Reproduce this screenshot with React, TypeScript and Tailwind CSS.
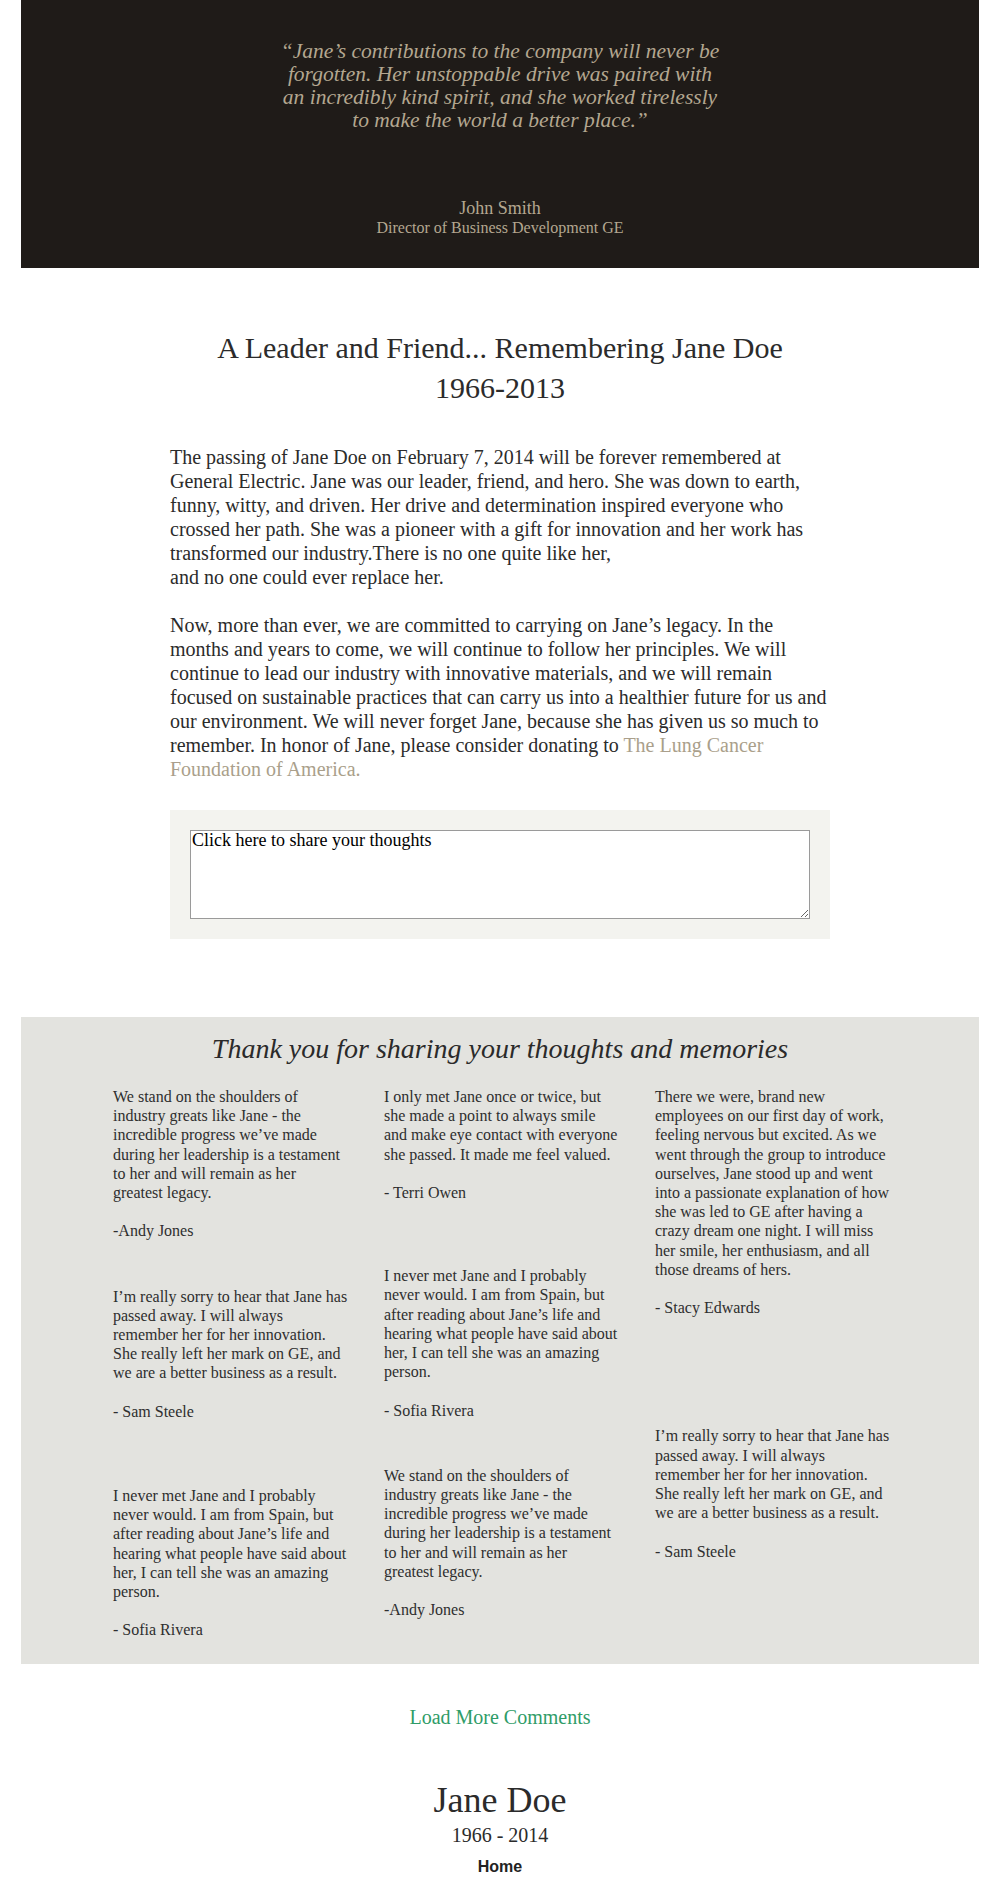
import React from 'react';

interface Memory {
  text: string;
  author: string;
  gap: string;
}

const columns: Memory[][] = [
  [
    {
      text: 'We stand on the shoulders of industry greats like Jane - the incredible progress we’ve made during her leadership is a testament to her and will remain as her greatest legacy.',
      author: '-Andy Jones',
      gap: 'mt-0',
    },
    {
      text: 'I’m really sorry to hear that Jane has passed away. I will always remember her for her innovation. She really left her mark on GE, and we are a better business as a result.',
      author: '- Sam Steele',
      gap: 'mt-[46px]',
    },
    {
      text: 'I never met Jane and I probably never would. I am from Spain, but after reading about Jane’s life and hearing what people have said about her, I can tell she was an amazing person.',
      author: '- Sofia Rivera',
      gap: 'mt-[65px]',
    },
  ],
  [
    {
      text: 'I only met Jane once or twice, but she made a point to always smile and make eye contact with everyone she passed. It made me feel valued.',
      author: '- Terri Owen',
      gap: 'mt-0',
    },
    {
      text: 'I never met Jane and I probably never would. I am from Spain, but after reading about Jane’s life and hearing what people have said about her, I can tell she was an amazing person.',
      author: '- Sofia Rivera',
      gap: 'mt-[64px]',
    },
    {
      text: 'We stand on the shoulders of industry greats like Jane - the incredible progress we’ve made during her leadership is a testament to her and will remain as her greatest legacy.',
      author: '-Andy Jones',
      gap: 'mt-[46px]',
    },
  ],
  [
    {
      text: 'There we were, brand new employees on our first day of work, feeling nervous but excited. As we went through the group to introduce ourselves, Jane stood up and went into a passionate explanation of how she was led to GE after having a crazy dream one night. I will miss her smile, her enthusiasm, and all those dreams of hers.',
      author: '- Stacy Edwards',
      gap: 'mt-0',
    },
    {
      text: 'I’m really sorry to hear that Jane has passed away. I will always remember her for her innovation. She really left her mark on GE, and we are a better business as a result.',
      author: '- Sam Steele',
      gap: 'mt-[109px]',
    },
  ],
];

const App: React.FC = () => {
  return (
    <div className="min-h-[1892px] bg-white font-['Liberation_Serif','Times_New_Roman',serif] text-[#2b2b2b]">
      {/* Tribute quote */}
      <section className="mx-[21px] h-[268px] bg-[#1f1b18] pt-[40px] text-center text-[#b4a790]">
        <p className="mx-auto text-[21.5px] italic leading-[23px] whitespace-nowrap">
          “Jane’s contributions to the company will never be
          <br />
          forgotten. Her unstoppable drive was paired with
          <br />
          an incredibly kind spirit, and she worked tirelessly
          <br />
          to make the world a better place.”
        </p>
        <p className="mt-[66px] text-[18px] leading-[20px]">John Smith</p>
        <p className="text-[16px] leading-[20px]">Director of Business Development GE</p>
      </section>

      {/* Story */}
      <section className="mt-[60px]">
        <h1 className="text-center text-[30px] leading-[40px] font-normal">
          A Leader and Friend... Remembering Jane Doe
          <br />
          1966-2013
        </h1>
        <div className="mx-auto mt-[37px] w-[660px] text-[20px] leading-[24px]">
          <p>
            The passing of Jane Doe on February 7, 2014 will be forever remembered at General Electric. Jane was our
            leader, friend, and hero. She was down to earth, funny, witty, and driven. Her drive and determination
            inspired everyone who crossed her path. She was a pioneer with a gift for innovation and her work has
            transformed our industry.There is no one quite like her,
            <br />
            and no one could ever replace her.
          </p>
          <p className="mt-[24px]">
            Now, more than ever, we are committed to carrying on Jane’s legacy. In the months and years to come, we
            will continue to follow her principles. We will continue to lead our industry with innovative materials,
            and we will remain focused on sustainable practices that can carry us into a healthier future for us and
            our environment. We will never forget Jane, because she has given us so much to remember. In honor of
            Jane, please consider donating to <span className="text-[#aa9f8b]">The Lung Cancer Foundation of America.</span>
          </p>
          <div className="mt-[29px] bg-[#f3f3ef] p-[20px]">
            <textarea
              className="block h-[89px] w-full border border-[#9a9a9a] bg-white px-[1px] py-0 font-['Liberation_Serif',serif] text-[18px] leading-[18px] text-black placeholder:text-black"
              placeholder="Click here to share your thoughts"
            />
          </div>
        </div>
      </section>

      {/* Memories */}
      <section className="mx-[21px] mt-[78px] bg-[#e3e3df] pt-[16px] pb-[24px]">
        <h2 className="text-center text-[28px] italic leading-[32px] text-[#2a2a2a]">
          Thank you for sharing your thoughts and memories
        </h2>
        <div className="mt-[22px] flex justify-center gap-[35px] pl-[4px] text-[16px] leading-[19.2px] text-[#2e2e2e]">
          {columns.map((col, i) => (
            <div key={i} className="flex w-[236px] flex-col">
              {col.map((m, j) => (
                <div key={j} className={m.gap}>
                  <p>{m.text}</p>
                  <p className="mt-[19.2px]">{m.author}</p>
                </div>
              ))}
            </div>
          ))}
        </div>
      </section>

      <div className="mt-[41px] text-center text-[20px] leading-[24px]">
        <a href="#" className="text-[#2f9c68]">
          Load More Comments
        </a>
      </div>

      <footer className="mt-[51px] pb-[15px] text-center">
        <p className="text-[36px] leading-[40px]">Jane Doe</p>
        <p className="mt-[3px] text-[20px] leading-[24px]">1966 - 2014</p>
        <p className="mt-[10px] font-['Liberation_Sans',Arial,sans-serif] text-[16px] font-bold leading-[20px] text-[#222]">
          Home
        </p>
      </footer>
    </div>
  );
};

export default App;
